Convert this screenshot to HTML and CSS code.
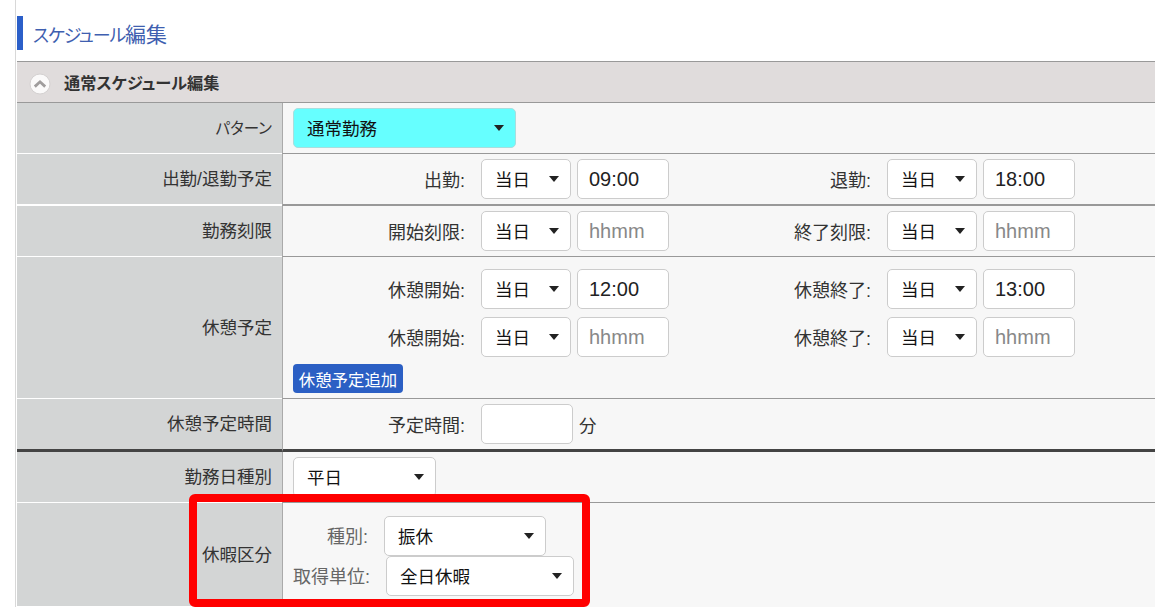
FILE: index.html
```html
<!DOCTYPE html>
<html lang="ja">
<head>
<meta charset="utf-8">
<title>スケジュール編集</title>
<link rel="stylesheet" href="styles.css">
</head>
<body>
<div class="page">
  <h1 class="title"><span class="kana">スケジュール</span>編集</h1>
  <section class="panel">
    <div class="panel-head">
      <svg class="toggle" width="22" height="22" viewBox="0 0 22 22"><circle cx="11" cy="11" r="10" fill="#fbfafa" stroke="#d4d1d1"/><path d="M5.8 13.6 11 8.8 16.2 13.6" fill="none" stroke="#a09d9d" stroke-width="2.8"/></svg>
      <span>通常スケジュール編集</span>
    </div>

    <div class="row">
      <div class="th"><span class="th-kana">パターン</span></div>
      <div class="td"><div class="sel sel-pattern"><select><option>通常勤務</option></select></div></div>
    </div>

    <div class="row row-thick">
      <div class="th">出勤/退勤予定</div>
      <div class="td pairs">
        <div class="pair"><label>出勤:</label><div class="sel sel-day"><select><option>当日</option></select></div><input class="time" value="09:00"></div>
        <div class="pair"><label>退勤:</label><div class="sel sel-day"><select><option>当日</option></select></div><input class="time" value="18:00"></div>
      </div>
    </div>

    <div class="row">
      <div class="th">勤務刻限</div>
      <div class="td pairs">
        <div class="pair"><label>開始刻限:</label><div class="sel sel-day"><select><option>当日</option></select></div><input class="time" placeholder="hhmm"></div>
        <div class="pair"><label>終了刻限:</label><div class="sel sel-day"><select><option>当日</option></select></div><input class="time" placeholder="hhmm"></div>
      </div>
    </div>

    <div class="row">
      <div class="th">休憩予定</div>
      <div class="td break-cell">
        <div class="pairs">
          <div class="pair"><label>休憩開始:</label><div class="sel sel-day"><select><option>当日</option></select></div><input class="time" value="12:00"></div>
          <div class="pair"><label>休憩終了:</label><div class="sel sel-day"><select><option>当日</option></select></div><input class="time" value="13:00"></div>
          <div class="pair"><label>休憩開始:</label><div class="sel sel-day"><select><option>当日</option></select></div><input class="time" placeholder="hhmm"></div>
          <div class="pair"><label>休憩終了:</label><div class="sel sel-day"><select><option>当日</option></select></div><input class="time" placeholder="hhmm"></div>
        </div>
        <button class="add" type="button">休憩予定追加</button>
      </div>
    </div>

    <div class="row row-dark">
      <div class="th">休憩予定時間</div>
      <div class="td pairs">
        <div class="pair"><label>予定時間:</label><input class="mins"><span class="unit">分</span></div>
      </div>
    </div>

    <div class="row">
      <div class="th">勤務日種別</div>
      <div class="td"><div class="sel sel-kind"><select><option>平日</option></select></div></div>
    </div>

    <div class="row row-last">
      <div class="th">休暇区分</div>
      <div class="td leave">
        <div class="leave-line"><label class="kind-label">種別:</label><div class="sel sel-type"><select><option>振休</option></select></div></div>
        <div class="leave-line"><label class="unit-label">取得単位:</label><div class="sel sel-unit"><select><option>全日休暇</option></select></div></div>
      </div>
    </div>
  </section>
  <div class="highlight"></div>
</div>
</body>
</html>
```
FILE: styles.css
```css
* { box-sizing: border-box; }
html, body { margin: 0; height: 100%; overflow: hidden; background: #fff; }
body {
  font-family: "Liberation Sans", "Noto Sans CJK JP", sans-serif;
  font-size: 17.5px;
  color: #333;
  font-feature-settings: "palt";
}
.page {
  position: relative;
  margin-left: 15px;
  height: 607px;
  padding: 16px 0 0 1px;
  border-left: 1px solid #d8d8d8;
  overflow: hidden;
}
.title {
  margin: 0 0 11px;
  height: 34px;
  padding-left: 10px;
  border-left: 6px solid #2b5fc9;
  font-size: 21px;
  font-weight: 400;
  line-height: 37px;
  color: #3f5fb0;
}
.kana { font-size: 18px; letter-spacing: -1.2px; }
.th-kana { font-size: 15.5px; }
.panel-head {
  display: flex;
  align-items: center;
  gap: 13px;
  height: 42px;
  padding-left: 12px;
  background: #e0dcdc;
  border-top: 1px solid #999;
  border-bottom: 1px solid #999;
  font-size: 16.2px;
  font-weight: 700;
  color: #333;
}
.toggle { margin-top: 4px; }
.row { display: grid; grid-template-columns: 265px 1fr; }
.th {
  display: flex;
  align-items: center;
  justify-content: flex-end;
  padding: 0 10px 3px 0;
  background: #d3d5d5;
  border-bottom: 1px solid #fff;
}
.td {
  padding: 5px 10px;
  background: #f7f7f7;
  border-left: 1px solid #aaa;
  border-bottom: 1px solid #999;
  min-height: 51px;
}
.row-thick .th { border-bottom-width: 2px; }
.row-thick .td { border-bottom-width: 2px; }
.row-dark .th, .row-dark .td { border-bottom: 3px solid #444; }
.row-dark .td { min-height: 53px; }
.row-last .td { border-bottom: 0; }
.row-last { height: 104px; }
.pairs { display: grid; grid-template-columns: 406px 406px; row-gap: 8px; align-content: start; }
.pair { display: flex; align-items: center; }
.pair label { width: 172px; padding-bottom: 1px; font-size: 18px; text-align: right; white-space: nowrap; }
.sel { position: relative; height: 40px; }
.sel select {
  appearance: none;
  display: block;
  width: 100%;
  height: 100%;
  padding: 2px 30px 0 13px;
  border: 1px solid #ccc;
  border-radius: 5px;
  background: #fff;
  color: #111;
  font: inherit;
  font-size: 17.5px;
  font-feature-settings: "palt";
}
.sel::after {
  content: "";
  position: absolute;
  top: 17px;
  right: 12px;
  border-left: 5px solid transparent;
  border-right: 5px solid transparent;
  border-top: 6px solid #222;
  pointer-events: none;
}
.sel-pattern { width: 223px; }
.sel-pattern select { background: #66ffff; border-color: #a8dede; }
.sel-kind { width: 143px; }
.sel-day { width: 90px; margin-left: 16px; }
.sel-type { width: 162px; }
.sel-unit { width: 188px; }
.time, .mins {
  height: 40px;
  border: 1px solid #ccc;
  border-radius: 5px;
  background: #fff;
  font: inherit;
  font-size: 20px;
  color: #222;
  padding: 0 11px;
}
.time { width: 92px; margin-left: 6px; }
.mins { width: 92px; margin-left: 16px; }
.time::placeholder { color: #888; opacity: 1; }
.unit { margin-left: 6px; }
.break-cell { padding-top: 12px; padding-bottom: 5px; }
.add {
  display: block;
  margin-top: 7px;
  height: 29px;
  width: 110px;
  padding: 0;
  border: 0;
  border-radius: 4px;
  background: #2b5fc4;
  color: #fff;
  font: inherit;
  font-size: 16.4px;
  font-feature-settings: "palt";
}
.leave { padding: 13px 0 0 10px; }
.leave-line { display: flex; align-items: center; }
.kind-label { width: 75px; padding-bottom: 2px; font-size: 18px; text-align: right; color: #666; margin-right: 16px; }
.unit-label { width: 76px; padding-bottom: 3px; font-size: 18px; text-align: right; color: #666; margin-right: 17px; white-space: nowrap; }
.highlight {
  position: absolute;
  left: 173px;
  top: 494px;
  width: 401px;
  height: 113px;
  border: 8px solid #f00;
  border-radius: 6px;
}
```
